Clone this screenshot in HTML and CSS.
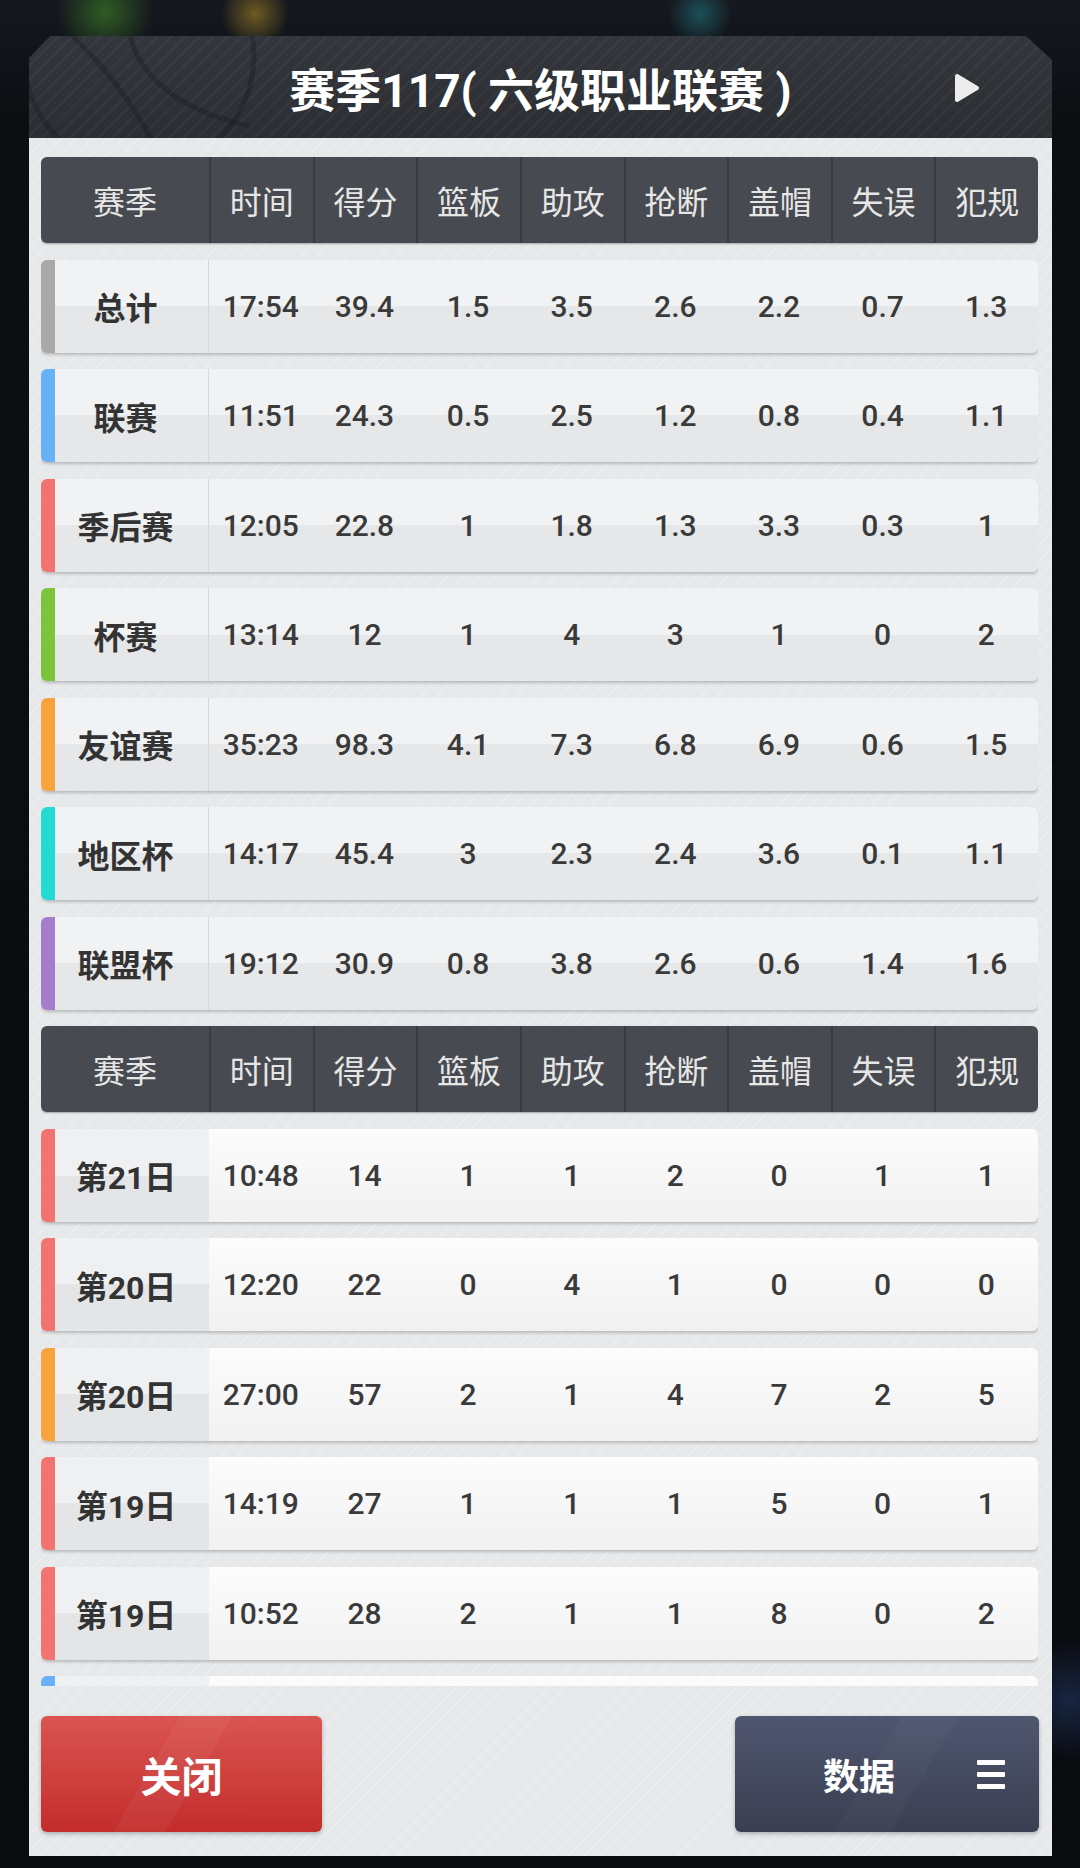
FILE: index.html
```html
<!DOCTYPE html>
<html lang="zh-CN">
<head>
  <meta charset="UTF-8" />
  <meta name="viewport" content="width=device-width, initial-scale=1.0" />
  <title>赛季117</title>
  <link rel="stylesheet" href="styles.css">
</head>
<body>
  <div class="panel">
    <!-- Title bar -->
    <div class="panel-head">
      <svg class="ball" viewBox="0 0 240 160" xmlns="http://www.w3.org/2000/svg">
        <circle cx="120" cy="40" r="115" />
        <path d="M20 -10 C 80 40, 120 90, 150 160" />
        <path d="M110 -20 C 100 40, 140 90, 230 110" />
      </svg>
      <h1>赛季117( 六级职业联赛 )</h1>
      <svg class="play" viewBox="0 0 26 30" xmlns="http://www.w3.org/2000/svg">
        <path d="M3 3 L23 15 L3 27 Z" />
      </svg>
    </div>

    <div class="panel-body">
      <div class="list">
        <div class="thead">
          <span>赛季</span><span>时间</span><span>得分</span><span>篮板</span><span>助攻</span><span>抢断</span><span>盖帽</span><span>失误</span><span>犯规</span>
        </div>

        <div class="row bar-gray">
          <span class="name">总计</span><span>17:54</span><span>39.4</span><span>1.5</span><span>3.5</span><span>2.6</span><span>2.2</span><span>0.7</span><span>1.3</span>
        </div>
        <div class="row bar-blue">
          <span class="name">联赛</span><span>11:51</span><span>24.3</span><span>0.5</span><span>2.5</span><span>1.2</span><span>0.8</span><span>0.4</span><span>1.1</span>
        </div>
        <div class="row bar-red">
          <span class="name">季后赛</span><span>12:05</span><span>22.8</span><span>1</span><span>1.8</span><span>1.3</span><span>3.3</span><span>0.3</span><span>1</span>
        </div>
        <div class="row bar-green">
          <span class="name">杯赛</span><span>13:14</span><span>12</span><span>1</span><span>4</span><span>3</span><span>1</span><span>0</span><span>2</span>
        </div>
        <div class="row bar-orange">
          <span class="name">友谊赛</span><span>35:23</span><span>98.3</span><span>4.1</span><span>7.3</span><span>6.8</span><span>6.9</span><span>0.6</span><span>1.5</span>
        </div>
        <div class="row bar-cyan">
          <span class="name">地区杯</span><span>14:17</span><span>45.4</span><span>3</span><span>2.3</span><span>2.4</span><span>3.6</span><span>0.1</span><span>1.1</span>
        </div>
        <div class="row bar-purple">
          <span class="name">联盟杯</span><span>19:12</span><span>30.9</span><span>0.8</span><span>3.8</span><span>2.6</span><span>0.6</span><span>1.4</span><span>1.6</span>
        </div>

        <div class="thead">
          <span>赛季</span><span>时间</span><span>得分</span><span>篮板</span><span>助攻</span><span>抢断</span><span>盖帽</span><span>失误</span><span>犯规</span>
        </div>

        <div class="row match bar-red">
          <span class="name">第21日</span><span>10:48</span><span>14</span><span>1</span><span>1</span><span>2</span><span>0</span><span>1</span><span>1</span>
        </div>
        <div class="row match bar-red">
          <span class="name">第20日</span><span>12:20</span><span>22</span><span>0</span><span>4</span><span>1</span><span>0</span><span>0</span><span>0</span>
        </div>
        <div class="row match bar-orange">
          <span class="name">第20日</span><span>27:00</span><span>57</span><span>2</span><span>1</span><span>4</span><span>7</span><span>2</span><span>5</span>
        </div>
        <div class="row match bar-red">
          <span class="name">第19日</span><span>14:19</span><span>27</span><span>1</span><span>1</span><span>1</span><span>5</span><span>0</span><span>1</span>
        </div>
        <div class="row match bar-red">
          <span class="name">第19日</span><span>10:52</span><span>28</span><span>2</span><span>1</span><span>1</span><span>8</span><span>0</span><span>2</span>
        </div>
        <!-- next row, scrolled mostly out of view -->
        <div class="row match bar-blue">
          <span class="name"></span>
        </div>
      </div>

      <div class="actions">
        <button class="btn btn-close">关闭</button>
        <button class="btn btn-data">
          <span>数据</span>
          <span class="menu"><i></i><i></i><i></i></span>
        </button>
      </div>
    </div>
  </div>
</body>
</html>
```

FILE: styles.css
```css
body {
  margin: 0;
  width: 1080px;
  height: 1868px;
  overflow: hidden;
  font-family: Roboto, "Noto Sans CJK SC", sans-serif;
  background:
    radial-gradient(circle at 105px 12px, rgba(70, 150, 40, 0.55), transparent 48px),
    radial-gradient(circle at 255px 14px, rgba(200, 160, 40, 0.5), transparent 34px),
    radial-gradient(circle at 700px 14px, rgba(40, 150, 160, 0.45), transparent 32px),
    radial-gradient(circle at 1070px 1700px, rgba(40, 70, 130, 0.45), transparent 60px),
    linear-gradient(#15181f 0, #0c0e12 120px, #0a0b0f 100%);
}

.panel {
  margin: 36px 0 0 29px;
  width: 1023px;
}

/* Title bar */
.panel-head {
  position: relative;
  height: 102px;
  display: flex;
  align-items: center;
  justify-content: center;
  overflow: hidden;
  background:
    repeating-linear-gradient(135deg, rgba(255, 255, 255, 0.035) 0 2px, transparent 2px 10px),
    linear-gradient(#33363c, #2c2e33);
  clip-path: polygon(21px 0, calc(100% - 26px) 0, 100% 24px, 100% 100%, 0 100%, 0 22px);
}

.panel-head h1 {
  margin: 0;
  font-size: 46px;
  font-weight: 700;
  color: #fff;
}

.ball {
  position: absolute;
  left: -10px;
  top: -20px;
  width: 240px;
  height: 160px;
  fill: none;
  stroke: rgba(20, 22, 26, 0.3);
  stroke-width: 5;
}

.play {
  position: absolute;
  right: 72px;
  top: 37px;
  width: 26px;
  height: 30px;
  fill: #ececec;
  stroke: #ececec;
  stroke-width: 4;
  stroke-linejoin: round;
}

/* Body */
.panel-body {
  padding: 19px 14px 24px 12px;
  background:
    repeating-linear-gradient(135deg, rgba(255, 255, 255, 0.18) 0 2px, transparent 2px 11px),
    #e7e8ea;
}

.list {
  height: 1529px;
  overflow: hidden;
  display: flex;
  flex-direction: column;
  gap: 16.5px;
}

.thead,
.row {
  display: grid;
  grid-template-columns: 168px repeat(8, 1fr);
  flex-shrink: 0;
}

.thead {
  height: 86px;
  background: #474a50;
  border-radius: 6px;
  color: #e6e6e6;
  font-size: 32px;
  box-shadow: 0 1px 2px rgba(0, 0, 0, 0.3);
}

.thead span {
  display: flex;
  align-items: center;
  justify-content: center;
  border-left: 2px solid #393b40;
}

.thead span:first-child {
  border-left: none;
}

.row {
  height: 93px;
  border-radius: 6px;
  overflow: hidden;
  background: linear-gradient(#f0f2f3 0 50%, #e5e7e9 50% 100%);
  box-shadow: 0 2px 3px rgba(0, 0, 0, 0.2);
  color: #3a3a3a;
  font-size: 30px;
  font-weight: 500;
}

.row span {
  display: flex;
  align-items: center;
  justify-content: center;
}

.row .name {
  font-size: 32px;
  font-weight: 700;
  color: #333;
  padding-left: 2px;
  border-right: 1px solid #d6d8da;
  box-shadow: inset 14px 0 0 var(--bar);
}

.row.match {
  background: linear-gradient(#fcfcfc, #f1f1f1);
}

.row.match .name {
  border-right: none;
  background: linear-gradient(#eef0f1 0 50%, #e3e5e7 50% 100%);
}

.bar-gray { --bar: #a9a9aa; }
.bar-blue { --bar: #67b2f6; }
.bar-red { --bar: #f27471; }
.bar-green { --bar: #7bc43b; }
.bar-orange { --bar: #f7a43e; }
.bar-cyan { --bar: #23dbd2; }
.bar-purple { --bar: #a67ccd; }

/* Buttons */
.actions {
  display: flex;
  justify-content: space-between;
  margin-top: 30px;
}

.btn {
  height: 116px;
  border: none;
  border-radius: 6px;
  color: #fff;
  font-family: inherit;
  font-weight: 700;
  cursor: pointer;
  box-shadow: 0 2px 4px rgba(0, 0, 0, 0.25);
}

.btn-close {
  width: 281px;
  font-size: 41px;
  background:
    linear-gradient(120deg, transparent 40%, rgba(255, 255, 255, 0.04) 40% 55%, transparent 55%),
    linear-gradient(#da5552, #c32d2c);
}

.btn-data {
  width: 304px;
  margin-right: -1px;
  display: flex;
  align-items: center;
  padding: 0 0 0 88px;
  gap: 82px;
  font-size: 36px;
  background:
    linear-gradient(120deg, transparent 45%, rgba(255, 255, 255, 0.025) 45% 60%, transparent 60%),
    linear-gradient(#4f566f, #3a3f51);
}

.menu {
  display: flex;
  flex-direction: column;
  gap: 7px;
  width: 28px;
}

.menu i {
  display: block;
  height: 5px;
  background: #fff;
  border-radius: 1px;
}
```
